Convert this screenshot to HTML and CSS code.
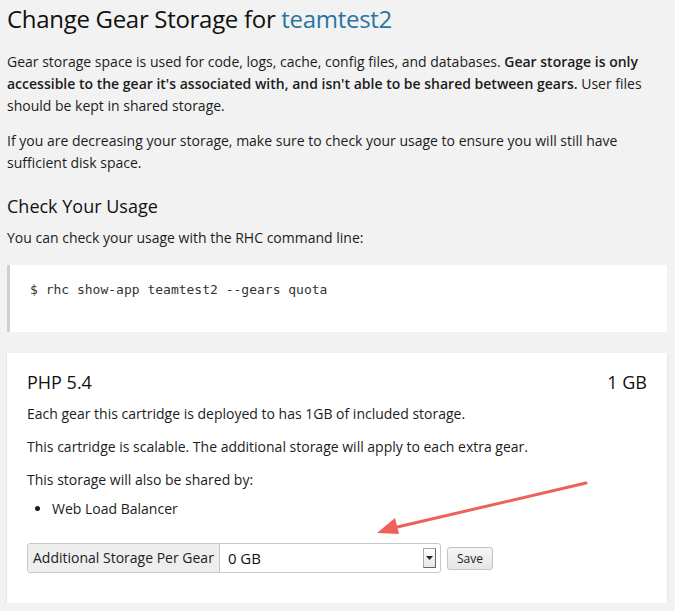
FILE: index.html
```html
<!DOCTYPE html>
<html>
<head>
<meta charset="utf-8">
<link rel="stylesheet" href="styles.css">
</head>
<body>
<div class="page">
  <h1 class="title">Change Gear Storage for <a class="app-link" href="#">teamtest2</a></h1>
  <p class="text">Gear storage space is used for code, logs, cache, config files, and databases. <strong>Gear storage is only accessible to the gear it's associated with, and isn't able to be shared between gears.</strong> User files should be kept in shared storage.</p>
  <p class="text gap">If you are decreasing your storage, make sure to check your usage to ensure you will still have sufficient disk space.</p>
  <h2 class="sub">Check Your Usage</h2>
  <p class="text small-gap">You can check your usage with the RHC command line:</p>
  <pre class="code">$ rhc show-app teamtest2 --gears quota</pre>
  <div class="card">
    <div class="card-head">
      <h3 class="cart">PHP 5.4</h3>
      <span class="size">1 GB</span>
    </div>
    <p class="card-text">Each gear this cartridge is deployed to has 1GB of included storage.</p>
    <p class="card-text">This cartridge is scalable. The additional storage will apply to each extra gear.</p>
    <p class="card-text">This storage will also be shared by:</p>
    <ul class="shared">
      <li>Web Load Balancer</li>
    </ul>
    <form class="form">
      <div class="group">
        <span class="addon">Additional Storage Per Gear</span>
        <div class="select">
          <span class="value">0 GB</span>
          <span class="arrow"><svg width="7" height="4" viewBox="0 0 7 4"><path d="M0 0h7L3.5 4z" fill="#222"/></svg></span>
        </div>
      </div>
      <button class="save" type="button">Save</button>
    </form>
    <svg class="pointer" width="220" height="60" viewBox="0 0 220 60">
      <line x1="213" y1="4" x2="20" y2="49" stroke="#f0605a" stroke-width="3" stroke-linecap="round"/>
      <path d="M4 54 L22 39 L26 55 Z" fill="#f0605a"/>
    </svg>
  </div>
</div>
</body>
</html>
```
FILE: styles.css
```css
html, body {
  margin: 0;
  padding: 0;
  background: #f2f2f2;
}
body {
  font-family: "Open Sans", "Liberation Sans", sans-serif;
  color: #1c1c1c;
  font-size: 14px;
  line-height: 22px;
}
.page {
  padding: 0 8px 0 7px;
}
.title {
  margin: 0;
  padding-top: 2px;
  font-size: 24px;
  font-weight: 400;
  line-height: 34px;
  letter-spacing: -0.3px;
  color: #111;
}
.app-link {
  color: #2a75a0;
  text-decoration: none;
}
.text {
  margin: 15px 0 0;
}
.text strong {
  font-weight: 600;
}
.gap {
  margin-top: 13px;
}
.sub {
  margin: 19px 0 0;
  font-size: 18px;
  font-weight: 400;
  line-height: 26px;
  color: #111;
}
.small-gap {
  margin-top: 8px;
}
.code {
  margin: 16px 0 0;
  background: #fff;
  border-left: 3px solid #cfcfcf;
  padding: 14px 20px 0;
  height: 53px;
  font-family: "DejaVu Sans Mono", "Liberation Mono", monospace;
  font-size: 13px;
  color: #333;
}
.card {
  position: relative;
  margin-top: 21px;
  background: #fff;
  box-shadow: 0 1px 2px rgba(0,0,0,0.12);
  padding: 16px 20px 30px;
  height: 204px;
}
.card-head {
  display: flex;
  justify-content: space-between;
  align-items: baseline;
}
.cart {
  margin: 0;
  font-size: 18px;
  font-weight: 400;
  line-height: 26px;
  color: #111;
}
.size {
  font-size: 18px;
  line-height: 26px;
  color: #111;
}
.card-text {
  margin: 8px 0 0;
  line-height: 22px;
}
.card-text + .card-text {
  margin-top: 11px;
}
.shared {
  margin: 7px 0 0;
  padding-left: 25px;
}
.form {
  display: flex;
  align-items: center;
  gap: 6px;
  margin-top: 23px;
}
.group {
  display: flex;
  border: 1px solid #c8c8c8;
  border-radius: 3px;
  height: 28px;
  width: 412px;
  overflow: hidden;
}
.addon {
  background: #eee;
  border-right: 1px solid #c8c8c8;
  padding: 0 5px;
  line-height: 28px;
  color: #222;
}
.select {
  flex: 1;
  display: flex;
  align-items: center;
  justify-content: space-between;
  padding: 0 4px 0 8px;
}
.value {
  color: #111;
  font-size: 15px;
}
.arrow {
  width: 13px;
  height: 20px;
  border: 1px solid #aaa;
  border-right-color: #666;
  border-bottom-color: #666;
  background: linear-gradient(#fff, #e6e6e6);
  display: flex;
  align-items: center;
  justify-content: center;
  box-sizing: border-box;
}
.save {
  font-family: "Open Sans", "Liberation Sans", sans-serif;
  font-size: 12px;
  height: 23px;
  padding: 0 9px;
  background: linear-gradient(#f6f6f6, #e6e6e6);
  border: 1px solid #c4c4c4;
  border-radius: 3px;
  color: #222;
}
.pointer {
  position: absolute;
  left: 366px;
  top: 126px;
}
```
